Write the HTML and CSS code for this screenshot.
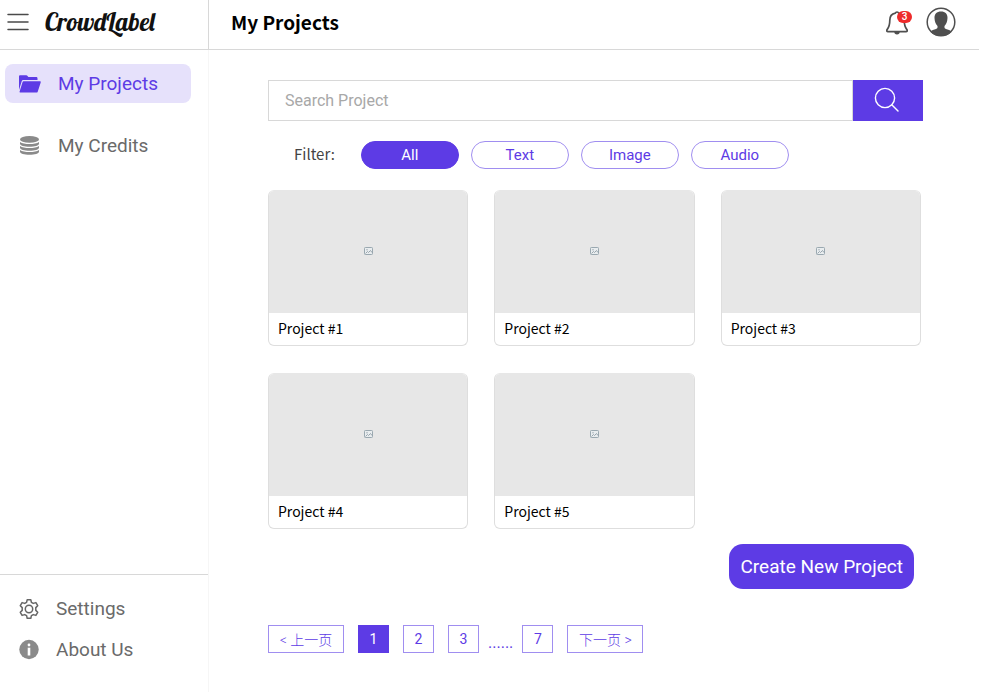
FILE: index.html
```html
<!DOCTYPE html>
<html lang="en">
<head>
<meta charset="utf-8">
<title>CrowdLabel - My Projects</title>
<meta name="viewport" content="width=device-width, initial-scale=1">
<link rel="stylesheet" href="styles.css">
</head>
<body>
<svg class="sprite" aria-hidden="true">
  <symbol id="picture" viewBox="0 0 9 8">
    <rect x="0.5" y="0.5" width="8" height="7" rx="0.8" fill="#e9edef" stroke="#9aa8b0"/>
    <path d="M1.5 6.500l2-2 1 1 2-2 1.500 2" fill="none" stroke="#8e9da6" stroke-width="0.9"/>
    <circle cx="3" cy="2.7" r="0.7" fill="#9aa8b0"/>
  </symbol>
</svg>
<div class="app">
  <header class="topbar">
    <div class="brand">
      <button class="icon-button menu" type="button" aria-label="Toggle menu">
        <svg width="22" height="18" viewBox="0 0 22 18" fill="none" stroke="#4a4a4a" stroke-width="1.5" stroke-linecap="round"><path d="M1 1.500h20M1 9h20M1 16.500h20"/></svg>
      </button>
      <a class="logo" href="#">CrowdLabel</a>
    </div>
    <div class="heading">
      <h1 class="title">My Projects</h1>
      <div class="actions">
        <button class="icon-button bell" type="button" aria-label="Notifications">
          <svg width="22" height="25" viewBox="0 0 22 25" fill="none" stroke="#4f4f4f" stroke-width="1.700" stroke-linejoin="round"><path d="M9.300 3.200a1.800 1.800 0 0 1 3.400 0C16.600 4 18.200 7 18.200 10.300c0 5 .8 7 2.700 9.300.8 1.100.2 2-.9 2H2c-1.100 0-1.700-.9-.9-2 1.900-2.300 2.700-4.300 2.700-9.300 0-3.300 1.600-6.300 5.500-7.100z"/><path d="M8.300 22h5.400a2.700 2.400 0 0 1-5.400 0z" fill="#4f4f4f" stroke="none"/></svg>
          <span class="badge">3</span>
        </button>
        <button class="icon-button" type="button" aria-label="Account">
          <svg width="30" height="30" viewBox="0 0 30 30"><circle cx="15" cy="15" r="13.800" fill="#fff" stroke="#4f4f4f" stroke-width="1.500"/><path d="M15 4.500c4.300 0 6.700 2.600 6.500 6.600-.1 3.500-1.300 6.300-3 7.900-.3 2 .3 2.700 2.200 3.300 2.300.7 4 1.300 5 2.400A14 14 0 0 1 15 29 14 14 0 0 1 4.300 24.700c1-1.100 2.700-1.700 5-2.400 1.900-.6 2.500-1.300 2.200-3.300-1.700-1.600-2.900-4.400-3-7.900-.2-4 2.200-6.600 6.500-6.600z" fill="#4f4f4f"/></svg>
        </button>
      </div>
    </div>
  </header>

  <aside class="sidebar">
    <nav class="nav" aria-label="Main">
      <a class="nav-item nav-item-active" href="#" aria-current="page">
        <svg class="nav-icon" width="24" height="20" viewBox="0 0 24 20" fill="#5d3be5"><path d="M1 16V2.500C1 1.600 1.500 1.200 2.300 1.200h6c.6 0 .9.200 1.200.7L10.400 3H18c.9 0 1.500.5 1.500 1.400V6H5.600c-1 0-1.600.4-1.900 1.300z"/><path d="M5.600 7.200h16.200c.8 0 1.100.5.900 1.200l-2.900 9c-.3.800-.7 1.200-1.600 1.200H2.500c-.8 0-1.100-.4-.9-1.100l3-9.400c.2-.6.500-.9 1-.9z"/></svg>
        My Projects
      </a>
      <a class="nav-item" href="#">
        <svg class="nav-icon" width="24" height="20" viewBox="0 0 24 20" fill="#8a8a8a"><ellipse cx="11.500" cy="3.400" rx="9.500" ry="3.300"/><path d="M2 6c2 1.500 5.500 2 9.500 2s7.500-.5 9.500-2v1.700c0 1.700-4.300 3-9.500 3S2 9.400 2 7.700zM2 10c2 1.500 5.500 2 9.500 2s7.500-.5 9.500-2v1.700c0 1.700-4.300 3-9.500 3S2 13.400 2 11.700zM2 14c2 1.500 5.500 2 9.500 2s7.500-.5 9.500-2v1.700c0 1.700-4.300 3-9.500 3S2 17.400 2 15.700z"/></svg>
        My Credits
      </a>
    </nav>
    <nav class="nav nav-footer" aria-label="Secondary">
      <a class="nav-item" href="#">
        <svg class="nav-icon" width="22" height="22" viewBox="0 0 22 22" fill="none" stroke="#666" stroke-width="1.500" stroke-linejoin="round"><path d="M9.200 1.700h3.600l.6 2.600 1.900 1.100 2.600-.8 1.800 3.100-1.900 1.900v2.800l1.900 1.900-1.800 3.100-2.600-.8-1.900 1.100-.6 2.600H9.200l-.6-2.600-1.900-1.100-2.600.8-1.800-3.100 1.900-1.900V9.600L2.300 7.700l1.800-3.100 2.600.8 1.900-1.100z"/><circle cx="11" cy="11" r="3.700"/></svg>
        Settings
      </a>
      <a class="nav-item" href="#">
        <svg class="nav-icon" width="22" height="22" viewBox="0 0 22 22"><circle cx="11" cy="10.500" r="9.700" fill="#8a8a8a"/><circle cx="11" cy="6" r="1.400" fill="#fff"/><path d="M9.700 8.700h2.600v7.800H9.700z" fill="#fff"/></svg>
        About Us
      </a>
    </nav>
  </aside>

  <main class="content">
    <form class="search" role="search">
      <input class="search-input" type="search" placeholder="Search Project" aria-label="Search Project">
      <button class="search-button" type="button" aria-label="Search">
        <svg width="26" height="26" viewBox="0 0 26 26" fill="none" stroke="#fff" stroke-width="1.400" stroke-linecap="round"><circle cx="11" cy="11" r="9.600"/><path d="M18 18l6 6"/></svg>
      </button>
    </form>

    <div class="filters" role="group" aria-labelledby="filter-label">
      <span class="filter-label" id="filter-label">Filter:</span>
      <button class="pill pill-active" type="button" aria-pressed="true">All</button>
      <button class="pill" type="button" aria-pressed="false">Text</button>
      <button class="pill" type="button" aria-pressed="false">Image</button>
      <button class="pill" type="button" aria-pressed="false">Audio</button>
    </div>

    <section class="projects" aria-label="Projects">
      <a class="card" href="#"><span class="thumb"><svg width="9" height="8"><use href="#picture"/></svg></span><span class="card-name">Project #1</span></a>
      <a class="card" href="#"><span class="thumb"><svg width="9" height="8"><use href="#picture"/></svg></span><span class="card-name">Project #2</span></a>
      <a class="card" href="#"><span class="thumb"><svg width="9" height="8"><use href="#picture"/></svg></span><span class="card-name">Project #3</span></a>
      <a class="card" href="#"><span class="thumb"><svg width="9" height="8"><use href="#picture"/></svg></span><span class="card-name">Project #4</span></a>
      <a class="card" href="#"><span class="thumb"><svg width="9" height="8"><use href="#picture"/></svg></span><span class="card-name">Project #5</span></a>
    </section>

    <button class="create" type="button">Create New Project</button>

    <nav class="pages" aria-label="Pagination">
      <button class="page page-wide" type="button">&lt; 上一页</button>
      <button class="page page-active" type="button" aria-current="page">1</button>
      <button class="page" type="button">2</button>
      <button class="page" type="button">3</button>
      <span class="dots">......</span>
      <button class="page" type="button">7</button>
      <button class="page page-wide" type="button">下一页 &gt;</button>
    </nav>
  </main>
</div>
</body>
</html>
```
FILE: styles.css
```css
:root {
  --accent: #5d3be5;
  --accent-line: #a08ef0;
  --line: #d8d8d8;
  --sans: Roboto, "Noto Sans CJK SC", sans-serif;
  --cjk: "Noto Sans CJK SC", sans-serif;
}

* { box-sizing: border-box; }

body {
  margin: 0;
  background: #fff;
  color: #000;
  font-family: var(--sans);
}

a { color: inherit; text-decoration: none; }

button, input { font-family: inherit; }

.sprite { position: absolute; width: 0; height: 0; }

.app {
  display: grid;
  grid-template-columns: 209px 1fr;
  grid-template-rows: auto 1fr;
  min-height: 100vh;
  padding-right: 27px;
}

/* Top bar */
.topbar {
  grid-column: 1 / -1;
  display: grid;
  grid-template-columns: 209px 1fr;
  height: 50px;
  border-bottom: 1px solid var(--line);
}

.brand {
  display: flex;
  align-items: center;
  gap: 16px;
  padding: 0 0 5px 7px;
  border-right: 1px solid var(--line);
}

.icon-button {
  display: flex;
  padding: 0;
  border: 0;
  background: none;
}

.logo {
  font: 25px/32px "Lobster", "Liberation Serif", serif;
  color: #111;
}

.heading {
  display: flex;
  align-items: center;
  justify-content: space-between;
  padding: 0 23px 5px 22px;
}

.title {
  margin: 0;
  font: bold 19px/30px var(--cjk);
}

.actions {
  display: flex;
  align-items: center;
  gap: 18px;
}

.bell { position: relative; }

.badge {
  position: absolute;
  top: 1px;
  left: 11px;
  width: 15px;
  border-radius: 6px;
  background: #ee2b2b;
  color: #fff;
  font-size: 10px;
  font-weight: 500;
  line-height: 12px;
  text-align: center;
}

/* Sidebar */
.sidebar {
  display: flex;
  flex-direction: column;
  justify-content: space-between;
  border-right: 1px solid #f6f6f6;
}

.nav {
  display: flex;
  flex-direction: column;
  gap: 23px;
  padding: 14px 17px 14px 5px;
}

.nav-item {
  display: flex;
  align-items: center;
  gap: 16px;
  padding: 0 13px;
  border-radius: 8px;
  color: #6a6a6a;
  font-size: 19px;
  line-height: 39px;
}

.nav-item-active {
  background: #e6e1fb;
  color: var(--accent);
}

.nav-footer {
  gap: 2px;
  padding-bottom: 23px;
  border-top: 1px solid var(--line);
}

/* Content */
.content {
  display: flex;
  flex-direction: column;
  padding: 30px 56px 30px 59px;
}

.search { display: flex; }

.search-input {
  flex: 1;
  min-width: 0;
  height: 41px;
  padding: 0 16px;
  border: 1px solid var(--line);
  border-radius: 0;
  outline: 0;
  background: #fff;
  font-size: 16px;
}

.search-input::placeholder { color: #a8a8a8; }

.search-button {
  display: flex;
  align-items: center;
  justify-content: center;
  width: 70px;
  padding: 0 2px 2px 0;
  border: 0;
  background: var(--accent);
}

.filters {
  display: flex;
  align-items: center;
  gap: 12px;
  margin-top: 20px;
  padding-left: 26px;
}

.filter-label {
  margin-right: 14px;
  padding-bottom: 2px;
  color: #444;
  font: 15px/24px var(--cjk);
}

.pill {
  width: 98px;
  height: 28px;
  padding: 0;
  border: 1px solid var(--accent-line);
  border-radius: 14px;
  background: #fff;
  color: var(--accent);
  font-size: 15px;
}

.pill-active {
  border-color: var(--accent);
  background: var(--accent);
  color: #fff;
}

.projects {
  display: grid;
  grid-template-columns: repeat(3, 1fr);
  gap: 27px 26px;
  margin: 21px 2px 0 0;
}

.card {
  display: flex;
  flex-direction: column;
  overflow: hidden;
  border: 1px solid #dedede;
  border-top-color: #e7e7e7;
  border-radius: 6px;
}

.thumb {
  display: flex;
  align-items: center;
  justify-content: center;
  height: 122px;
  padding-bottom: 2px;
  background: #e7e7e7;
}

.card-name {
  padding: 0 9px 2px;
  font: 14px/30px var(--cjk);
}

.create {
  align-self: flex-end;
  height: 45px;
  margin: 15px 9px 0 0;
  padding: 0 11px;
  border: 0;
  border-radius: 14px;
  background: var(--accent);
  color: #fff;
  font-size: 19px;
}

.pages {
  display: flex;
  gap: 14px;
  margin-top: 36px;
  color: var(--accent);
}

.page {
  min-width: 31px;
  height: 28px;
  padding: 0;
  border: 1px solid var(--accent-line);
  background: #fff;
  color: var(--accent);
  font-size: 14px;
}

.page-active {
  border-color: var(--accent);
  background: var(--accent);
  color: #fff;
}

.page-wide {
  width: 76px;
  font-weight: 300;
}

.dots {
  height: 28px;
  margin: 0 -5px;
  font-size: 16px;
  line-height: 35px;
}
```
